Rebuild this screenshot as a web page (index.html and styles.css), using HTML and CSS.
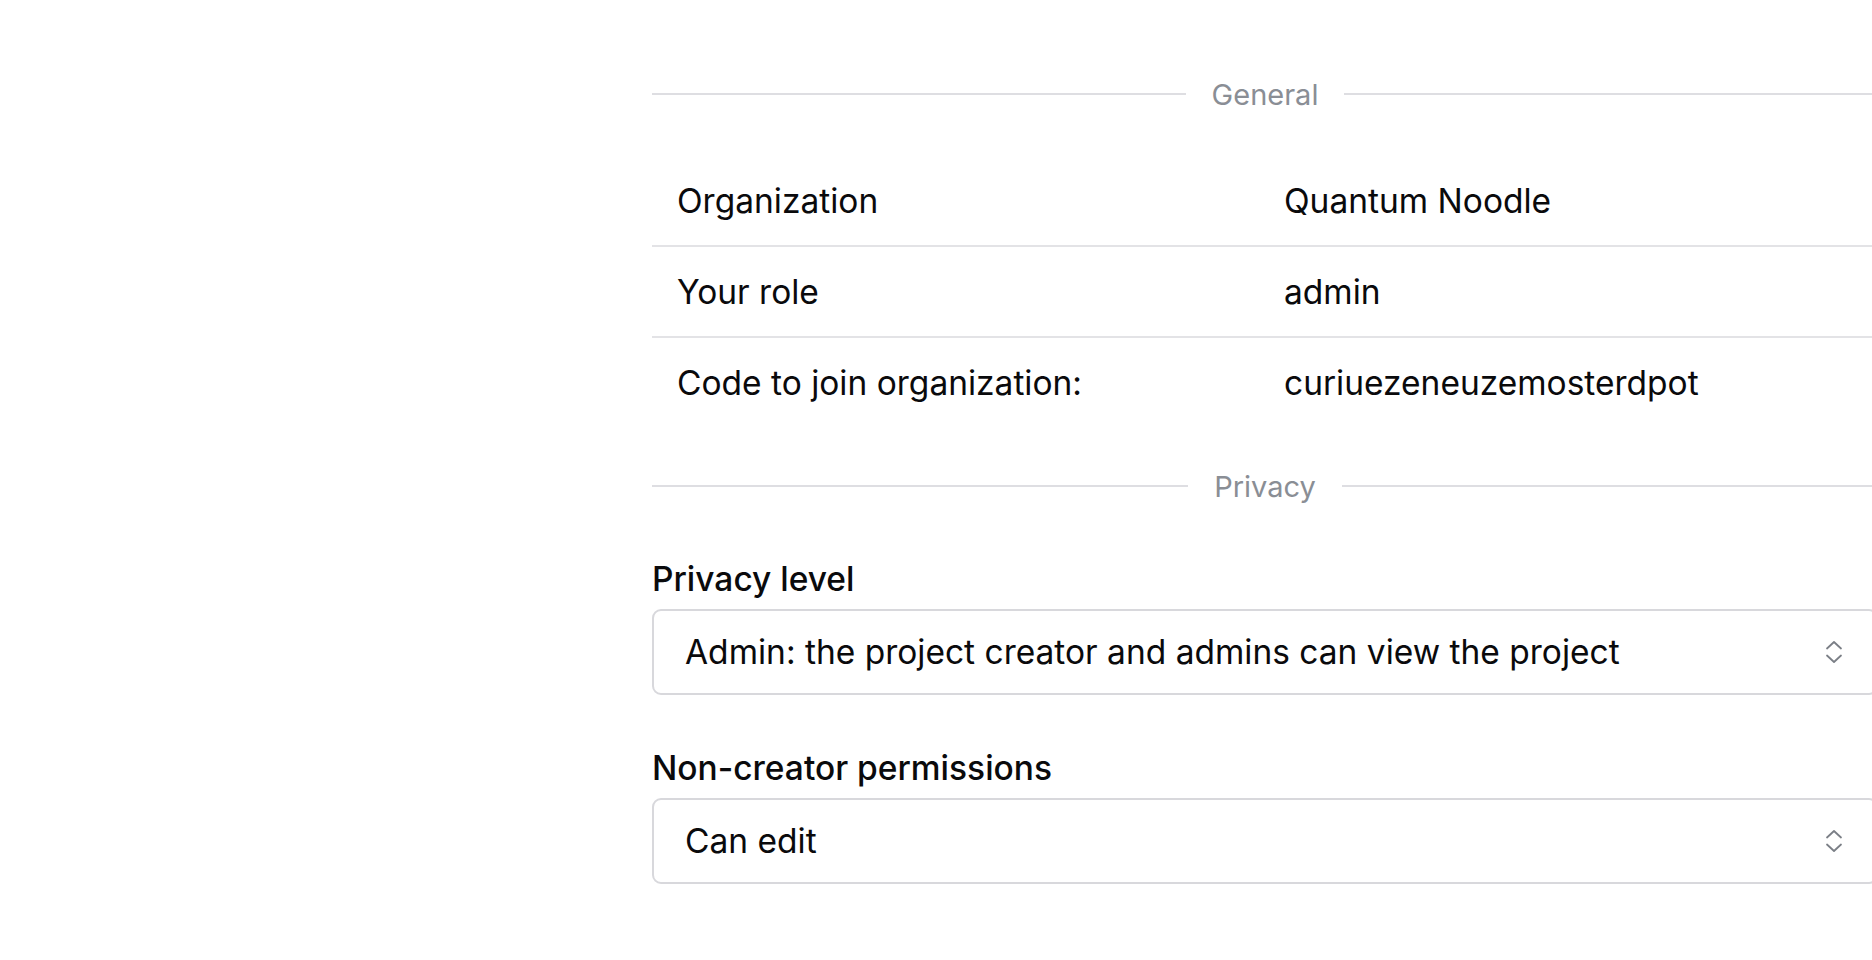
FILE: index.html
```html
<!DOCTYPE html>
<html lang="en">
<head>
<meta charset="utf-8">
<title>Project settings</title>
<link rel="stylesheet" href="styles.css">
</head>
<body>
<div class="page">
  <aside class="side"></aside>
  <main class="content">
    <div class="divider"><span class="divider-label">General</span></div>
    <div class="info-table">
      <div class="info-row">
        <div class="cell key">Organization</div>
        <div class="cell val">Quantum Noodle</div>
      </div>
      <div class="info-row">
        <div class="cell key">Your role</div>
        <div class="cell val">admin</div>
      </div>
      <div class="info-row last">
        <div class="cell key">Code to join organization:</div>
        <div class="cell val">curiuezeneuzemosterdpot</div>
      </div>
    </div>
    <div class="divider privacy"><span class="divider-label">Privacy</span></div>
    <div class="field">
      <div class="field-label">Privacy level</div>
      <div class="select">
        <span class="select-text">Admin: the project creator and admins can view the project</span>
        <svg class="chev" width="18" height="26" viewBox="0 0 18 26" fill="none" stroke="#7b7f86" stroke-width="1.8" stroke-linecap="round" stroke-linejoin="round"><path d="M2 9.5 L9 3 L16 9.5"/><path d="M2 16.5 L9 23 L16 16.5"/></svg>
      </div>
    </div>
    <div class="field">
      <div class="field-label">Non-creator permissions</div>
      <div class="select">
        <span class="select-text">Can edit</span>
        <svg class="chev" width="18" height="26" viewBox="0 0 18 26" fill="none" stroke="#7b7f86" stroke-width="1.8" stroke-linecap="round" stroke-linejoin="round"><path d="M2 9.5 L9 3 L16 9.5"/><path d="M2 16.5 L9 23 L16 16.5"/></svg>
      </div>
    </div>
  </main>
</div>
</body>
</html>
```
FILE: styles.css
```css
html, body {
  margin: 0;
  padding: 0;
  background: #ffffff;
  overflow: hidden;
}
body {
  font-family: "Inter", "Noto Sans", sans-serif;
  color: #0a0a0c;
}
.page {
  display: grid;
  grid-template-columns: 652px 1226px;
  width: 1878px;
}
.content {
  padding-top: 74px;
}
.divider {
  display: flex;
  align-items: center;
  height: 40px;
  gap: 26px;
}
.divider::before,
.divider::after {
  content: "";
  flex: 1;
  height: 2px;
  background: #dedee2;
}
.divider-label {
  font-size: 29px;
  color: #8a8e95;
  line-height: 1;
}
.info-table {
  margin-top: 42px;
}
.info-row {
  display: grid;
  grid-template-columns: 607px 1fr;
  height: 89px;
  align-items: center;
  border-bottom: 2px solid #e3e3e6;
}
.info-row.last {
  border-bottom: none;
}
.cell {
  font-size: 33.5px;
  line-height: 40px;
}
.key {
  padding-left: 25px;
}
.val {
  padding-left: 25px;
}
.divider.privacy {
  margin-top: 39px;
}
.field {
  margin-top: 53px;
}
.field-label {
  font-size: 33.5px;
  font-weight: 500;
  line-height: 40px;
  margin-bottom: 10px;
}
.select {
  display: flex;
  align-items: center;
  justify-content: space-between;
  height: 86px;
  box-sizing: border-box;
  border: 2px solid #d8d8dc;
  border-radius: 9px;
  padding: 0 33px 0 31px;
  font-size: 33.5px;
}
.select-text {
  line-height: 40px;
}
.chev {
  display: block;
}
```
